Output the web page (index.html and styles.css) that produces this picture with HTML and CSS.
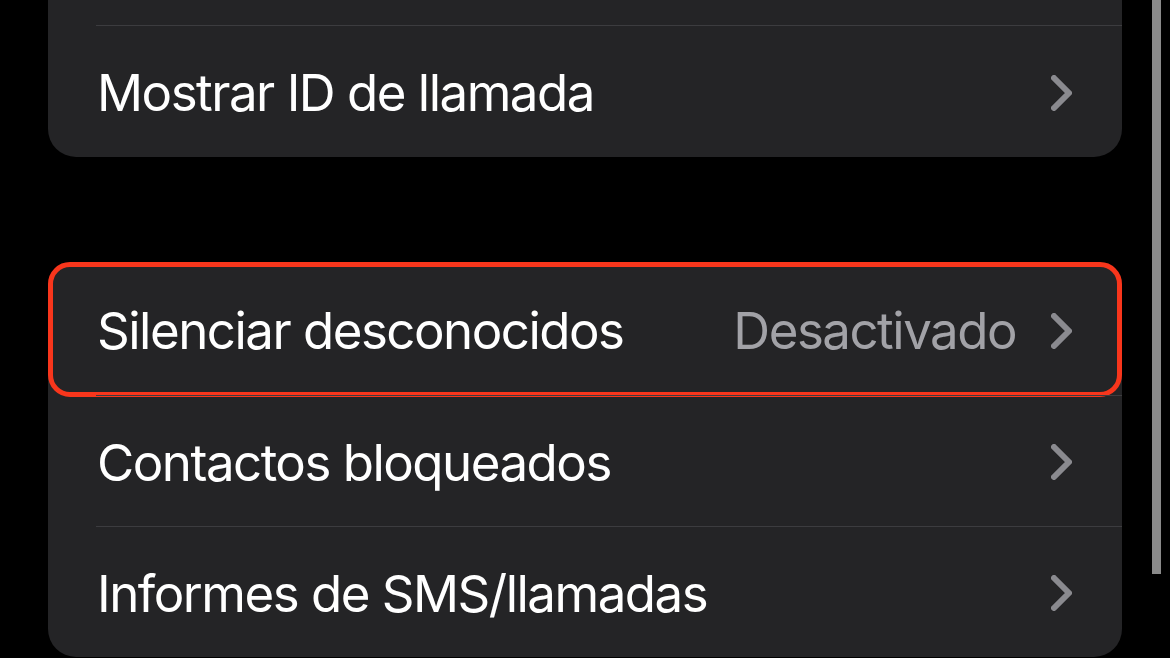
FILE: index.html
```html
<!DOCTYPE html>
<html lang="es">
<head>
<meta charset="utf-8">
<title>Teléfono</title>
<link rel="stylesheet" href="styles.css">
</head>
<body>
<div class="screen">
  <div class="card card-top">
    <div class="row row-first"></div>
    <div class="row row-tall">
      <span class="label">Mostrar ID de llamada</span>
      <span class="chev"><svg viewBox="0 0 21 36" width="21" height="36"><path d="M3 3 L18 18 L3 33"/></svg></span>
    </div>
  </div>
  <div class="card">
    <div class="row row-first">
      <span class="label">Silenciar desconocidos</span>
      <span class="value">Desactivado</span>
      <span class="chev"><svg viewBox="0 0 21 36" width="21" height="36"><path d="M3 3 L18 18 L3 33"/></svg></span>
      <span class="highlight"></span>
    </div>
    <div class="row">
      <span class="label">Contactos bloqueados</span>
      <span class="chev"><svg viewBox="0 0 21 36" width="21" height="36"><path d="M3 3 L18 18 L3 33"/></svg></span>
    </div>
    <div class="row">
      <span class="label">Informes de SMS/llamadas</span>
      <span class="chev"><svg viewBox="0 0 21 36" width="21" height="36"><path d="M3 3 L18 18 L3 33"/></svg></span>
    </div>
  </div>
  <div class="scroll-indicator"></div>
</div>
</body>
</html>
```
FILE: styles.css
```css
html, body {
  margin: 0;
  padding: 0;
  background: #000;
}
body {
  width: 1170px;
  height: 658px;
  overflow: hidden;
  font-family: Inter, "Noto Sans", "Liberation Sans", sans-serif;
}
.screen {
  position: relative;
  width: 1170px;
  height: 658px;
  padding: 0 48px;
  box-sizing: border-box;
}
.card {
  background: #242426;
  border-radius: 28px;
  display: flex;
  flex-direction: column;
}
.card-top {
  margin-top: -106px;
  margin-bottom: 107px;
}
.row {
  position: relative;
  box-sizing: border-box;
  height: 131px;
  display: flex;
  align-items: center;
  padding: 2px 50px 0 1px;
  border-top: 1px solid #3c3c3f;
  margin-left: 48px;
}
.row-first {
  border-top: none;
}
.row-tall {
  height: 132px;
}
.label {
  flex: 1;
  color: #fff;
  font-size: 51px;
  letter-spacing: -1.5px;
  white-space: nowrap;
}
.value {
  color: #a2a2a7;
  font-size: 51px;
  letter-spacing: -1.5px;
  margin-right: 35px;
  white-space: nowrap;
}
.chev {
  display: flex;
  width: 21px;
  height: 36px;
}
.chev path {
  fill: none;
  stroke: #8a8a8f;
  stroke-width: 6;
  stroke-linecap: round;
  stroke-linejoin: round;
}
.highlight {
  position: absolute;
  left: -48px;
  right: 0;
  top: -2px;
  bottom: -2px;
  border: 5px solid #f8361c;
  border-radius: 22px;
  pointer-events: none;
}
.scroll-indicator {
  position: absolute;
  left: 1152px;
  top: -20px;
  width: 9px;
  height: 700px;
  background: #8a8a8a;
}
```
